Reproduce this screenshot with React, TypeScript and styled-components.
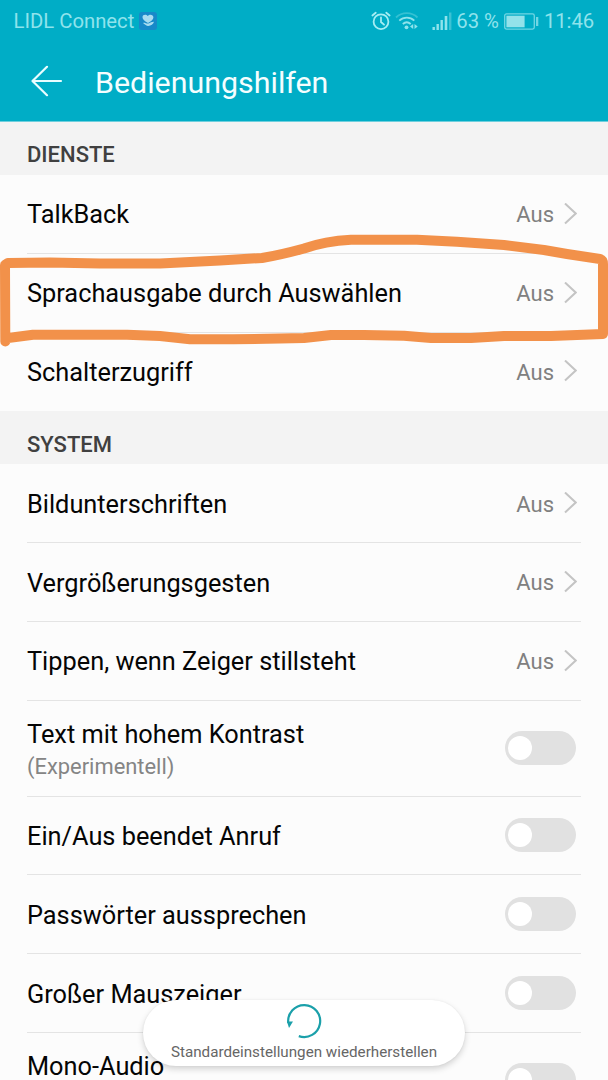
import React from 'react';
import styled, { createGlobalStyle } from 'styled-components';

const GlobalStyle = createGlobalStyle`
  * { box-sizing: border-box; }
  body { margin: 0; background: #fcfcfc; font-family: Roboto, "Liberation Sans", sans-serif; }
  svg { display: block; flex: none; }
`;

const Screen = styled.div`
  position: relative;
  width: 608px;
  height: 1080px;
  overflow: hidden;
  background: #fcfcfc;
`;

const Header = styled.header`
  height: 122px;
  background: #00adc6;
  border-bottom: 1px solid #6fcfdd;
`;

const StatusBar = styled.div`
  display: flex;
  align-items: center;
  height: 42px;
  padding: 0 14px 0 13.5px;
  font-size: 20.3px;
  line-height: 24px;
  color: #8fe3ec;
  white-space: nowrap;
`;

const Carrier = styled.span`
  margin-right: 5px;
`;

const StatusIcons = styled.div`
  display: flex;
  align-items: center;
  margin-left: auto;
`;

const WifiIconBox = styled.div`
  margin: 0 13px 0 4.5px;
`;

const Percent = styled.span`
  margin: 0 5px 0 4px;
`;

const Clock = styled.span`
  margin-left: 5px;
  letter-spacing: -0.1px;
`;

const TitleBar = styled.div`
  display: flex;
  align-items: center;
  height: 78px;
  padding-left: 31px;
  gap: 32px;
`;

const Title = styled.h1`
  margin: 4px 0 0;
  font-size: 30.4px;
  line-height: 36px;
  font-weight: 400;
  color: #f4feff;
`;

const SectionHeader = styled.h2`
  display: flex;
  align-items: center;
  height: 53px;
  margin: 0;
  padding: 12px 27px 0;
  background: #f3f3f3;
  color: #404040;
  font-size: 22px;
  line-height: 26px;
  font-weight: 500;
`;

const List = styled.div`
  padding: 0 27px;

  & + ${SectionHeader} { padding-top: 14px; }
`;

const Row = styled.div<{ $tall?: boolean }>`
  display: flex;
  align-items: center;
  justify-content: space-between;
  height: ${(p) => (p.$tall ? 95.8 : 78.8)}px;
  border-bottom: 1px solid #e4e4e4;
  &:last-child { border-bottom-color: transparent; }
`;

const Labels = styled.div<{ $top?: boolean }>`
  display: flex;
  flex-direction: column;
  align-self: ${(p) => (p.$top ? 'flex-start' : 'center')};
  padding-top: ${(p) => (p.$top ? 18.5 : 3)}px;
`;

const Label = styled.span`
  font-size: 25.33px;
  line-height: 32px;
  color: #050505;
  white-space: nowrap;
`;

const Hint = styled.span`
  margin-top: 1px;
  font-size: 21.9px;
  line-height: 30px;
  color: #858585;
`;

const Value = styled.div`
  display: flex;
  align-items: center;
  gap: 10px;
  padding-right: 4px;
  color: #808080;
  font-size: 22px;
  line-height: 28px;
`;

const State = styled.span`
  padding-top: 2.6px;
`;

const Switch = styled.div`
  display: flex;
  align-items: center;
  width: 71px;
  height: 34px;
  margin-right: 5px;
  padding-left: 3px;
  border-radius: 17px;
  background: #e1e1e1;
`;

const Knob = styled.div`
  width: 24px;
  height: 24px;
  border-radius: 50%;
  background: #fff;
`;

const Marking = styled.svg`
  position: absolute;
  left: 0;
  top: 230px;
  pointer-events: none;
`;

const ResetButton = styled.div`
  position: absolute;
  left: 143px;
  top: 1000px;
  width: 322px;
  height: 66px;
  border-radius: 33px;
  background: #fff;
  box-shadow: 0 3px 6px rgba(0, 0, 0, 0.17), 0 0 2px rgba(0, 0, 0, 0.06);
  display: flex;
  flex-direction: column;
  align-items: center;
  padding-top: 3px;
  gap: 4px;
  color: #666;
  font-size: 15.2px;
  line-height: 18px;
  white-space: nowrap;
`;

const CarrierBadge = () => (
  <svg width="18" height="18" viewBox="0 0 18 18">
    <rect width="18" height="18" rx="3" fill="#1789c9" />
    <path d="M9 11C5 8.6 3.5 7 3.5 5.2C3.5 2.6 7 2 8.8 4.1C10.3 2 14.4 2.4 14.4 5.4C14.3 7.6 12 9.4 9 11Z" fill="#a9dcf0" />
    <path d="M4 11C6 10.2 7.3 12 9.3 11.5C11.4 10.8 12.3 9.8 15 9.8C14.2 12.3 11.5 14.2 8.8 13.9C6.8 13.7 5.8 12.2 4 11Z" fill="#a9dcf0" />
  </svg>
);

const AlarmIcon = () => (
  <svg width="20" height="20" viewBox="0 0 20 20" fill="none" stroke="#a5edf3" strokeWidth="1.8" strokeLinecap="round">
    <circle cx="10" cy="10.7" r="7.4" />
    <path d="M10 6.4V11L13 13.7M1.4 4.5L4.7 1.7M18.6 4.5L15.3 1.7" />
  </svg>
);

const WifiIcon = () => (
  <svg width="24" height="20" viewBox="0 0 24 20" fill="none" strokeWidth="1.8">
    <path d="M1 6.5C7 0.7 16.5 0.7 22.5 6.5" stroke="#35c1d3" />
    <path d="M4.3 9.7C8.7 5.6 15 5.6 19.3 9.7" stroke="#8fe3ec" />
    <path d="M7.8 13C10.2 10.8 13.3 10.8 15.7 13" stroke="#8fe3ec" />
    <circle cx="11.5" cy="16.3" r="1.9" fill="#8fe3ec" />
    <path d="M18.2 13V18L15 15.5ZM19.5 13V18L22.7 15.5Z" fill="#8fe3ec" />
  </svg>
);

const SignalIcon = () => (
  <svg width="20" height="19" viewBox="0 0 20 19" fill="#8fe3ec">
    <rect x="0.5" y="15" width="2.4" height="3" />
    <rect x="4.5" y="12" width="2.4" height="6" />
    <rect x="8.5" y="8" width="2.4" height="10" />
    <rect x="12.7" y="4" width="2.6" height="14" />
    <rect x="17" y="0.5" width="2.4" height="17.5" fill="#3cc2d4" />
  </svg>
);

const BatteryIcon = () => (
  <svg width="35" height="17" viewBox="0 0 35 17">
    <rect x="0.7" y="0.9" width="29.6" height="15.2" rx="1.8" fill="none" stroke="#71d6e3" strokeWidth="1.3" />
    <rect x="2.4" y="2.7" width="18.2" height="11.6" fill="#93e2ea" />
    <rect x="32" y="4" width="2.3" height="9" fill="#71d6e3" />
  </svg>
);

const BackArrow = () => (
  <svg width="32" height="32" viewBox="0 0 32 32" fill="none" stroke="#e9fdff" strokeWidth="2.2" strokeLinecap="round" strokeLinejoin="round">
    <path d="M30 16H1.5M16 1.8L1.5 16L16 30.2" />
  </svg>
);

const Chevron = () => (
  <svg width="13" height="22" viewBox="0 0 13 22" fill="none" stroke="#c4c4c4" strokeWidth="2">
    <path d="M1 0.5L11.7 10.5L1 20.5" />
  </svg>
);

const ResetIcon = () => (
  <svg width="36" height="36" viewBox="0 0 36 36">
    <path d="M2.3 20A16 16 0 1 1 12.8 33.1" fill="none" stroke="#1ba0aa" strokeWidth="2.2" />
    <path d="M1 18.5L7 18.5L3 25Z" fill="#1ba0aa" />
  </svg>
);

const LinkRow = ({ label }: { label: string }) => (
  <Row>
    <Labels><Label>{label}</Label></Labels>
    <Value><State>Aus</State><Chevron /></Value>
  </Row>
);

const SwitchRow = ({ label, hint, tall }: { label: string; hint?: string; tall?: boolean }) => (
  <Row $tall={tall}>
    <Labels $top={tall}>
      <Label>{label}</Label>
      {hint && <Hint>{hint}</Hint>}
    </Labels>
    <Switch><Knob /></Switch>
  </Row>
);

export default function App() {
  return (
    <>
      <GlobalStyle />
      <Screen>
        <Header>
          <StatusBar>
            <Carrier>LIDL Connect</Carrier>
            <CarrierBadge />
            <StatusIcons>
              <AlarmIcon />
              <WifiIconBox><WifiIcon /></WifiIconBox>
              <SignalIcon />
              <Percent>63 %</Percent>
              <BatteryIcon />
              <Clock>11:46</Clock>
            </StatusIcons>
          </StatusBar>
          <TitleBar>
            <BackArrow />
            <Title>Bedienungshilfen</Title>
          </TitleBar>
        </Header>
        <SectionHeader>DIENSTE</SectionHeader>
        <List>
          <LinkRow label="TalkBack" />
          <LinkRow label="Sprachausgabe durch Auswählen" />
          <LinkRow label="Schalterzugriff" />
        </List>
        <SectionHeader>SYSTEM</SectionHeader>
        <List>
          <LinkRow label="Bildunterschriften" />
          <LinkRow label="Vergrößerungsgesten" />
          <LinkRow label="Tippen, wenn Zeiger stillsteht" />
          <SwitchRow label="Text mit hohem Kontrast" hint="(Experimentell)" tall />
          <SwitchRow label="Ein/Aus beendet Anruf" />
          <SwitchRow label="Passwörter aussprechen" />
          <SwitchRow label="Großer Mauszeiger" />
          <SwitchRow label="Mono-Audio" tall />
        </List>
        <Marking width="608" height="120" viewBox="0 230 608 120" fill="none" stroke="#f2914a" strokeWidth="10" strokeLinecap="round" strokeLinejoin="round">
          <path d="M5.3 341.5L5 265L8 263L50 262.5L100 263.5L160 263.5L220 260.5L262 258Q280 255 304 248.5Q325 241 351 239.7L417 239.7L457 241.7L504 245L544 250L567 254L600 259Q603 260 603 264V334L551 336H504L471 338H431L404 335.7L364 335H331L304 338L280 338.5L233 339.3H190L160 336L127 334.7H33L8 338" />
        </Marking>
        <ResetButton>
          <ResetIcon />
          <span>Standardeinstellungen wiederherstellen</span>
        </ResetButton>
      </Screen>
    </>
  );
}
